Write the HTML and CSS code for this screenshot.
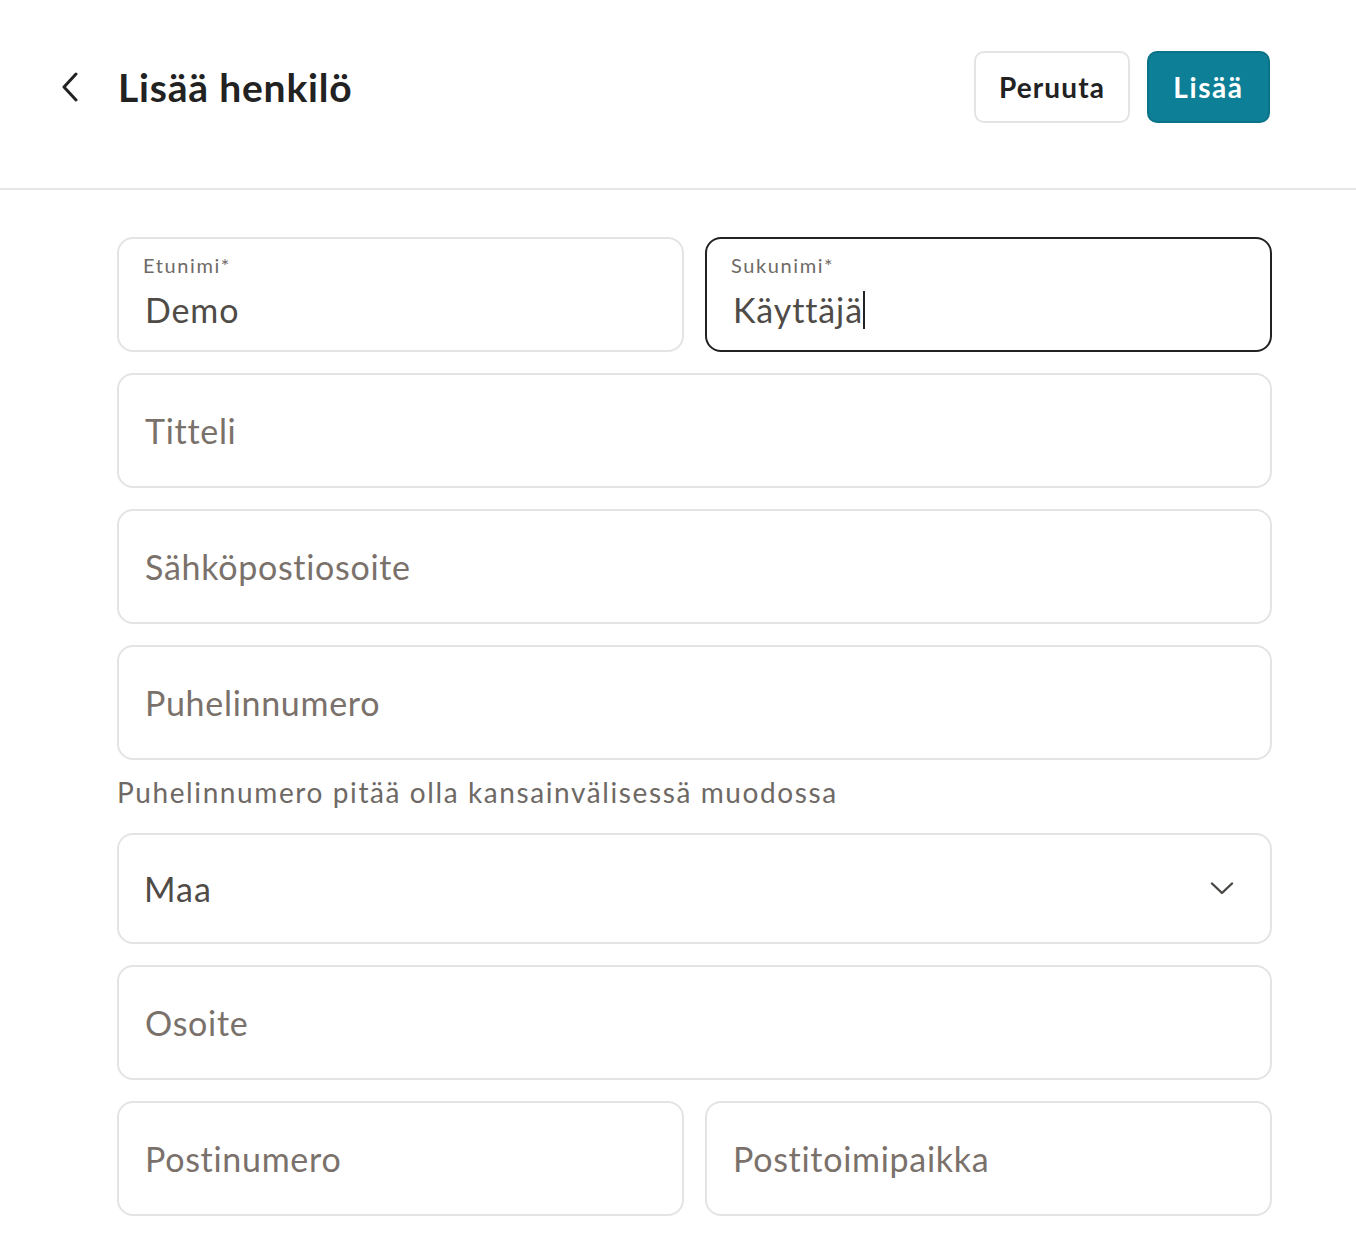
FILE: index.html
```html
<!DOCTYPE html>
<html lang="fi">
<head>
<meta charset="utf-8">
<title>Lisää henkilö</title>
<link rel="stylesheet" href="styles.css">
</head>
<body>
<header class="topbar">
  <div class="title-group">
    <button class="back" aria-label="Takaisin">
      <svg width="20" height="30" viewBox="0 0 20 30"><path d="M16 2 L4 15 L16 28" fill="none" stroke="#222" stroke-width="3" stroke-linecap="round" stroke-linejoin="round"/></svg>
    </button>
    <h1 class="title">Lisää henkilö</h1>
  </div>
  <div class="actions">
    <button class="btn btn-secondary">Peruuta</button>
    <button class="btn btn-primary">Lisää</button>
  </div>
</header>
<main class="form">
  <div class="row two">
    <div class="field filled">
      <span class="label">Etunimi*</span>
      <span class="value">Demo</span>
    </div>
    <div class="field filled focused">
      <span class="label">Sukunimi*</span>
      <span class="value">Käyttäjä<span class="caret"></span></span>
    </div>
  </div>
  <div class="field"><span class="placeholder">Titteli</span></div>
  <div class="field"><span class="placeholder">Sähköpostiosoite</span></div>
  <div class="group">
    <div class="field"><span class="placeholder">Puhelinnumero</span></div>
    <p class="helper">Puhelinnumero pitää olla kansainvälisessä muodossa</p>
  </div>
  <div class="field select">
    <span class="select-value">Maa</span>
    <svg class="chev" width="24" height="13" viewBox="0 0 24 13"><path d="M2 1.5 L12 11 L22 1.5" fill="none" stroke="#4a4643" stroke-width="2.4" stroke-linecap="round" stroke-linejoin="round"/></svg>
  </div>
  <div class="field"><span class="placeholder">Osoite</span></div>
  <div class="row two">
    <div class="field"><span class="placeholder">Postinumero</span></div>
    <div class="field"><span class="placeholder">Postitoimipaikka</span></div>
  </div>
</main>
</body>
</html>
```
FILE: styles.css
```css
* { box-sizing: border-box; }
body {
  margin: 0;
  background: #fff;
  font-family: Lato, "Open Sans", sans-serif;
  color: #222;
}
.topbar {
  height: 190px;
  border-bottom: 2px solid #e6e6e6;
  display: flex;
  align-items: center;
  justify-content: space-between;
  padding: 0 86px 14px 60px;
}
.title-group { display: flex; align-items: center; gap: 38px; }
.back {
  border: 0; background: none; padding: 0; margin: 0;
  width: 20px; height: 30px; display: flex;
}
.title {
  margin: 0;
  font-size: 39px;
  font-weight: 700;
  color: #222;
  letter-spacing: 0.8px;
}
.actions { display: flex; gap: 17px; }
.btn {
  height: 72px;
  border-radius: 10px;
  font-family: inherit;
  font-size: 28px;
  font-weight: 700;
  padding: 0;
  letter-spacing: 1.1px;
}
.btn-secondary {
  background: #fff;
  border: 2px solid #e4e4e4;
  color: #222;
  width: 156px;
}
.btn-primary {
  background: #0d7f96;
  border: 2px solid #0b7389;
  color: #fff;
  width: 123px;
  letter-spacing: 1.6px;
}
.form {
  width: 1155px;
  margin: 47px 0 0 117px;
  display: flex;
  flex-direction: column;
  gap: 21px;
}
.row.two {
  display: grid;
  grid-template-columns: 1fr 1fr;
  gap: 21px;
}
.field {
  height: 115px;
  border: 2px solid #e4e4e4;
  border-radius: 16px;
  display: flex;
  flex-direction: column;
  justify-content: center;
  padding: 0 26px;
}
.field.filled { justify-content: flex-start; padding-top: 12px; }
.field.focused { border-color: #222; }
.label {
  font-size: 20px;
  color: #6e6a66;
  line-height: 28px;
  margin-left: -2px;
  letter-spacing: 1.6px;
}
.value {
  font-size: 34px;
  color: #4f4b47;
  line-height: 40px;
  margin-top: 11px;
  display: flex;
  align-items: center;
  letter-spacing: 0.9px;
}
.caret {
  display: inline-block;
  width: 2px;
  height: 38px;
  background: #222;
  margin-left: 0;
}
.placeholder {
  font-size: 34px;
  color: #7a716b;
  line-height: 40px;
  letter-spacing: 0.7px;
}
.group { display: flex; flex-direction: column; gap: 13px; }
.helper {
  margin: 0;
  font-size: 28px;
  line-height: 39px;
  color: #6e6965;
  padding-left: 0;
  letter-spacing: 1.6px;
}
.field.select {
  height: 111px;
  flex-direction: row;
  align-items: center;
  justify-content: space-between;
  padding: 0 36px 0 25px;
}
.select-value {
  font-size: 34px;
  color: #4f4b47;
  letter-spacing: 1px;
}
.chev { display: block; }
```
